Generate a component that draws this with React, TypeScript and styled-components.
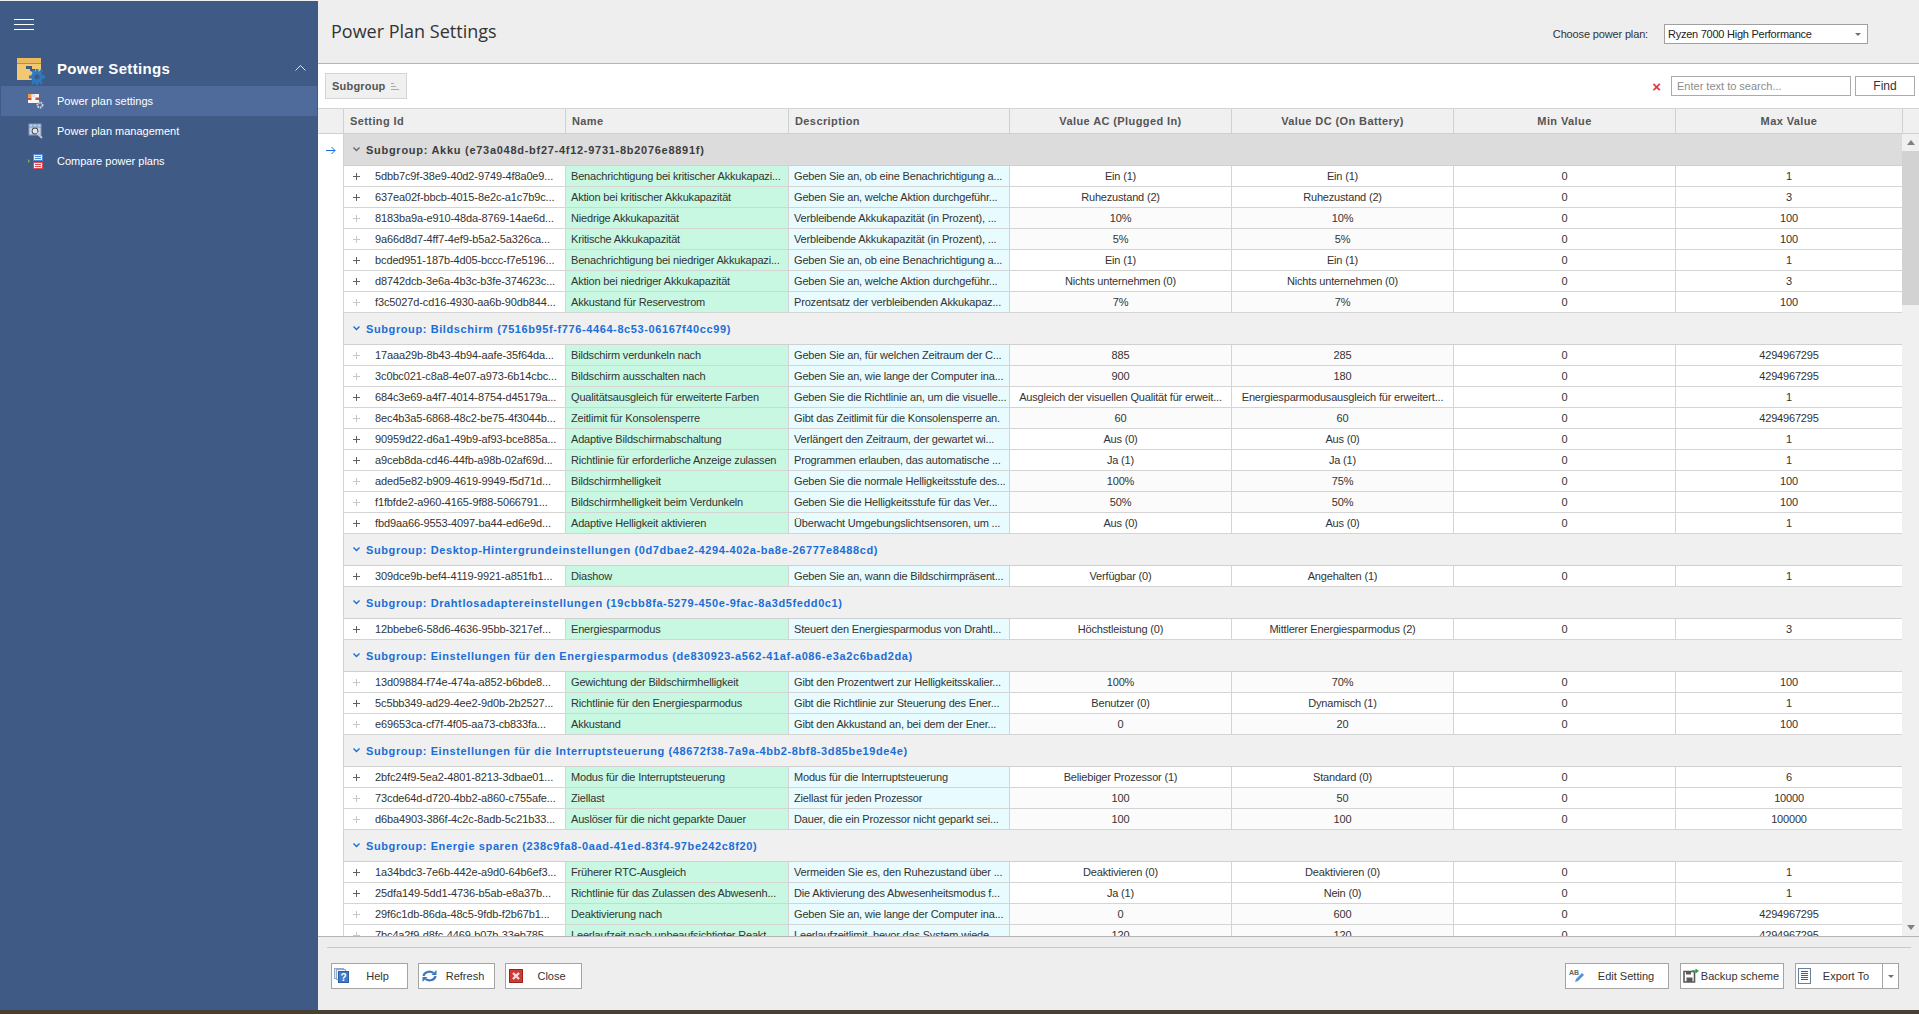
import React from "react";
import styled, { createGlobalStyle } from "styled-components";

const Global = createGlobalStyle`
  html, body { margin: 0; padding: 0; height: 100%; overflow: hidden; background: #4a3f35; }
  #root { height: 100%; }
  * { box-sizing: border-box; }
`;

const FONT = `"Liberation Sans", Arial, sans-serif`;
const COLS = "25px 222px 223px 221px 222px 222px 222px 227px 17px";

const Shell = styled.div`
  width: 1919px; height: 1014px; display: flex; flex-direction: column;
  background: #4a3f35; font-family: ${FONT}; font-size: 11px; color: #333;
`;
const Window = styled.div`display: flex; height: 1010px; padding-top: 1px; background: #f0f0f0;`;
const Sidebar = styled.aside`
  width: 318px; flex: none; background: #3e5a85; color: #fff; padding: 0 1px;
  display: flex; flex-direction: column;
`;
const Burger = styled.div`height: 54px; padding: 18px 0 0 13px; display: flex; flex-direction: column; gap: 4px;
  span { display: block; width: 20px; height: 1px; background: #fff; }
`;
const GroupHead = styled.div`height: 31px; display: flex; align-items: center; padding: 0 11px 0 15px;`;
const GroupTitle = styled.div`font-size: 15px; font-weight: 700; margin: 0 0 4px 12px; flex: 1; letter-spacing: .35px;`;
const Collapse = styled.svg`margin-bottom: 5px;`;
const NavItem = styled.div<{ $active?: boolean }>`
  height: 30px; display: flex; align-items: center; padding-left: 27px; gap: 13px; font-size: 11px;
  background: ${p => (p.$active ? "#4e6b9b" : "transparent")};
`;
const Main = styled.main`flex: 1; display: flex; flex-direction: column; min-width: 0;`;
const Header = styled.header`
  height: 63px; flex: none; background: #eeeeee; border-bottom: 1px solid #b4b4b4; display: flex;
  align-items: flex-start; justify-content: space-between; padding: 17px 0 0 13px;
`;
const Title = styled.h1`margin: 0; font: 400 18px "Open Sans", sans-serif; color: #333; line-height: 26px;`;
const PlanPicker = styled.div`display: flex; align-items: center; margin: 6px 51px 0 0; gap: 16px; letter-spacing: -.15px;`;
const Combo = styled.div`
  width: 204px; height: 20px; background: #fff; border: 1px solid #a0a0a0; display: flex; align-items: center;
  justify-content: space-between; padding: 0 6px 0 3px; color: #222; letter-spacing: -.25px;
`;
const Caret = styled.span`width: 0; height: 0; border-style: solid; border-color: #707070 transparent transparent; border-width: 3px 3px 0;`;
const SearchBar = styled.div`
  height: 45px; flex: none; background: #fff; border-bottom: 1px solid #d4d4d4; display: flex; align-items: center;
  padding: 0 4px 0 7px;
`;
const GroupChip = styled.div`
  height: 26px; width: 82px; background: #f0f0f0; border: 1px solid #d4d4d4; display: flex; align-items: center;
  padding-left: 6px; gap: 5px; font-weight: 700; color: #555; letter-spacing: .2px;
`;
const Spacer = styled.div`flex: 1;`;
const ClearX = styled.span`color: #e0364a; font-weight: 700; font-size: 15px; line-height: 15px; margin-right: 10px;`;
const SearchInput = styled.div`width: 180px; height: 20px; border: 1px solid #ababab; padding-left: 5px; line-height: 18px; color: #8c8c8c;`;
const FindBtn = styled.div`width: 60px; height: 20px; margin-left: 4px; border: 1px solid #ababab; text-align: center; line-height: 18px; color: #333; font-size: 12px;`;
const GridArea = styled.div`flex: 1; min-height: 0; overflow: hidden; background: #fff; position: relative; border-bottom: 1px solid #b4b4b4;`;
const HeadRow = styled.div`
  display: grid; grid-template-columns: ${COLS}; height: 25px; background: #f0f0f0; border-bottom: 1px solid #d0d0d0;
`;
const HeadCell = styled.div<{ $center?: boolean }>`
  border-left: 1px solid #d0d0d0; display: flex; align-items: center; font-weight: 700; color: #555; padding: 0 6px;
  letter-spacing: .4px;
  justify-content: ${p => (p.$center ? "center" : "flex-start")};
`;
const IndicatorHead = styled.div``;
const Scroll = styled.div`
  position: absolute; right: 0; top: 25px; bottom: 0; width: 17px; background: #f0f0f0;
`;
const ScrollBtn = styled.div<{ $pos: "top" | "bottom" }>`
  position: absolute; left: 0; right: 0; height: 17px; display: flex; align-items: center; justify-content: center;
  ${p => (p.$pos === "top" ? "top: 0;" : "bottom: 0;")}
`;
const Thumb = styled.div`position: absolute; left: 0; right: 0; top: 17px; height: 154px; background: #d2d2d2;`;
const Tri = styled.span<{ $up?: boolean }>`
  width: 0; height: 0; border-left: 4px solid transparent; border-right: 4px solid transparent;
  ${p => (p.$up ? "border-bottom: 5px solid #808080;" : "border-top: 5px solid #808080;")}
`;
const GroupRow = styled.div`height: 32px; display: grid; grid-template-columns: 25px 1fr;`;
const Indicator = styled.div`display: flex; align-items: center; justify-content: center; color: #1a6ed8; background: #fff;`;
const GroupBody = styled.div<{ $focus?: boolean }>`
  display: flex; align-items: center; gap: 6px; padding-left: 9px; font-weight: 700; margin-right: 17px;
  letter-spacing: ${p => (p.$focus ? ".72px" : ".6px")};
  border-left: 1px solid #d0d0d0; border-bottom: 1px solid #d0d0d0;
  background: ${p => (p.$focus ? "#dcdcdc" : "#f0f0f0")};
  color: ${p => (p.$focus ? "#3c3c3c" : "#1a6ed8")};
`;
const Chevron = styled.svg`flex: none;`;
const Row = styled.div`display: grid; grid-template-columns: 25px 222px 223px 221px 222px 222px 222px 227px; height: 21px;`;
const Cell = styled.div<{ $bg?: string; $center?: boolean }>`
  border-left: 1px solid #d4d4d4; border-bottom: 1px solid #d4d4d4; padding: 0 5px; display: flex; align-items: center;
  white-space: nowrap; overflow: hidden; letter-spacing: -.18px; background: ${p => p.$bg || "#fff"};
  justify-content: ${p => (p.$center ? "center" : "flex-start")};
`;
const IdCell = styled(Cell)`padding-left: 9px; gap: 15px; letter-spacing: -.12px;`;
const Plus = styled.span<{ $on: boolean }>`
  position: relative; width: 7px; height: 7px; flex: none;
  &::before, &::after { content: ""; position: absolute; background: ${p => (p.$on ? "#606060" : "#c8c8c8")}; }
  &::before { left: 0; right: 0; top: 3px; height: 1px; }
  &::after { top: 0; bottom: 0; left: 3px; width: 1px; }
`;
const Footer = styled.footer`height: 73px; flex: none; background: #eeeeee; padding: 10px 8px 0 9px;`;
const Rule = styled.div`height: 1px; background: #c8c8c8;`;
const Buttons = styled.div`display: flex; align-items: center; justify-content: space-between; margin-top: 15px; padding: 0 12px 0 4px;`;
const ButtonGroup = styled.div<{ $gap: number }>`display: flex; align-items: center; gap: ${p => p.$gap}px;`;
const Split = styled.div`display: flex;`;
const Btn = styled.div<{ $w: number }>`
  width: ${p => p.$w}px; height: 26px; border: 1px solid #a4a4a4; background: #fff; display: flex; align-items: center;
  padding: 0 2px; font-size: 11px; color: #333; flex: none;
`;
const BtnLabel = styled.span`flex: 1; text-align: center; white-space: nowrap;`;
const SplitArrow = styled.div`width: 16px; height: 26px; border: 1px solid #a4a4a4; border-left: 0; background: #fff; display: flex; align-items: center; justify-content: center;`;

type R = [string, string, string, string, string, string, string, boolean];
type G = { title: string; focus?: boolean; rows: R[] };

const groups: G[] = [
  { focus: true, title: "Subgroup: Akku (e73a048d-bf27-4f12-9731-8b2076e8891f)", rows: [
    ["5dbb7c9f-38e9-40d2-9749-4f8a0e9...", "Benachrichtigung bei kritischer Akkukapazi...", "Geben Sie an, ob eine Benachrichtigung a...", "Ein (1)", "Ein (1)", "0", "1", true],
    ["637ea02f-bbcb-4015-8e2c-a1c7b9c...", "Aktion bei kritischer Akkukapazität", "Geben Sie an, welche Aktion durchgeführ...", "Ruhezustand (2)", "Ruhezustand (2)", "0", "3", true],
    ["8183ba9a-e910-48da-8769-14ae6d...", "Niedrige Akkukapazität", "Verbleibende Akkukapazität (in Prozent), ...", "10%", "10%", "0", "100", false],
    ["9a66d8d7-4ff7-4ef9-b5a2-5a326ca...", "Kritische Akkukapazität", "Verbleibende Akkukapazität (in Prozent), ...", "5%", "5%", "0", "100", false],
    ["bcded951-187b-4d05-bccc-f7e5196...", "Benachrichtigung bei niedriger Akkukapazi...", "Geben Sie an, ob eine Benachrichtigung a...", "Ein (1)", "Ein (1)", "0", "1", true],
    ["d8742dcb-3e6a-4b3c-b3fe-374623c...", "Aktion bei niedriger Akkukapazität", "Geben Sie an, welche Aktion durchgeführ...", "Nichts unternehmen (0)", "Nichts unternehmen (0)", "0", "3", true],
    ["f3c5027d-cd16-4930-aa6b-90db844...", "Akkustand für Reservestrom", "Prozentsatz der verbleibenden Akkukapaz...", "7%", "7%", "0", "100", false],
  ]},
  { title: "Subgroup: Bildschirm (7516b95f-f776-4464-8c53-06167f40cc99)", rows: [
    ["17aaa29b-8b43-4b94-aafe-35f64da...", "Bildschirm verdunkeln nach", "Geben Sie an, für welchen Zeitraum der C...", "885", "285", "0", "4294967295", false],
    ["3c0bc021-c8a8-4e07-a973-6b14cbc...", "Bildschirm ausschalten nach", "Geben Sie an, wie lange der Computer ina...", "900", "180", "0", "4294967295", false],
    ["684c3e69-a4f7-4014-8754-d45179a...", "Qualitätsausgleich für erweiterte Farben", "Geben Sie die Richtlinie an, um die visuelle...", "Ausgleich der visuellen Qualität für erweit...", "Energiesparmodusausgleich für erweitert...", "0", "1", true],
    ["8ec4b3a5-6868-48c2-be75-4f3044b...", "Zeitlimit für Konsolensperre", "Gibt das Zeitlimit für die Konsolensperre an.", "60", "60", "0", "4294967295", false],
    ["90959d22-d6a1-49b9-af93-bce885a...", "Adaptive Bildschirmabschaltung", "Verlängert den Zeitraum, der gewartet wi...", "Aus (0)", "Aus (0)", "0", "1", true],
    ["a9ceb8da-cd46-44fb-a98b-02af69d...", "Richtlinie für erforderliche Anzeige zulassen", "Programmen erlauben, das automatische ...", "Ja (1)", "Ja (1)", "0", "1", true],
    ["aded5e82-b909-4619-9949-f5d71d...", "Bildschirmhelligkeit", "Geben Sie die normale Helligkeitsstufe des...", "100%", "75%", "0", "100", false],
    ["f1fbfde2-a960-4165-9f88-5066791...", "Bildschirmhelligkeit beim Verdunkeln", "Geben Sie die Helligkeitsstufe für das Ver...", "50%", "50%", "0", "100", false],
    ["fbd9aa66-9553-4097-ba44-ed6e9d...", "Adaptive Helligkeit aktivieren", "Überwacht Umgebungslichtsensoren, um ...", "Aus (0)", "Aus (0)", "0", "1", true],
  ]},
  { title: "Subgroup: Desktop-Hintergrundeinstellungen (0d7dbae2-4294-402a-ba8e-26777e8488cd)", rows: [
    ["309dce9b-bef4-4119-9921-a851fb1...", "Diashow", "Geben Sie an, wann die Bildschirmpräsent...", "Verfügbar (0)", "Angehalten (1)", "0", "1", true],
  ]},
  { title: "Subgroup: Drahtlosadaptereinstellungen (19cbb8fa-5279-450e-9fac-8a3d5fedd0c1)", rows: [
    ["12bbebe6-58d6-4636-95bb-3217ef...", "Energiesparmodus", "Steuert den Energiesparmodus von Drahtl...", "Höchstleistung (0)", "Mittlerer Energiesparmodus (2)", "0", "3", true],
  ]},
  { title: "Subgroup: Einstellungen für den Energiesparmodus (de830923-a562-41af-a086-e3a2c6bad2da)", rows: [
    ["13d09884-f74e-474a-a852-b6bde8...", "Gewichtung der Bildschirmhelligkeit", "Gibt den Prozentwert zur Helligkeitsskalier...", "100%", "70%", "0", "100", false],
    ["5c5bb349-ad29-4ee2-9d0b-2b2527...", "Richtlinie für den Energiesparmodus", "Gibt die Richtlinie zur Steuerung des Ener...", "Benutzer (0)", "Dynamisch (1)", "0", "1", true],
    ["e69653ca-cf7f-4f05-aa73-cb833fa...", "Akkustand", "Gibt den Akkustand an, bei dem der Ener...", "0", "20", "0", "100", false],
  ]},
  { title: "Subgroup: Einstellungen für die Interruptsteuerung (48672f38-7a9a-4bb2-8bf8-3d85be19de4e)", rows: [
    ["2bfc24f9-5ea2-4801-8213-3dbae01...", "Modus für die Interruptsteuerung", "Modus für die Interruptsteuerung", "Beliebiger Prozessor (1)", "Standard (0)", "0", "6", true],
    ["73cde64d-d720-4bb2-a860-c755afe...", "Ziellast", "Ziellast für jeden Prozessor", "100", "50", "0", "10000", false],
    ["d6ba4903-386f-4c2c-8adb-5c21b33...", "Auslöser für die nicht geparkte Dauer", "Dauer, die ein Prozessor nicht geparkt sei...", "100", "100", "0", "100000", false],
  ]},
  { title: "Subgroup: Energie sparen (238c9fa8-0aad-41ed-83f4-97be242c8f20)", rows: [
    ["1a34bdc3-7e6b-442e-a9d0-64b6ef3...", "Früherer RTC-Ausgleich", "Vermeiden Sie es, den Ruhezustand über ...", "Deaktivieren (0)", "Deaktivieren (0)", "0", "1", true],
    ["25dfa149-5dd1-4736-b5ab-e8a37b...", "Richtlinie für das Zulassen des Abwesenh...", "Die Aktivierung des Abwesenheitsmodus f...", "Ja (1)", "Nein (0)", "0", "1", true],
    ["29f6c1db-86da-48c5-9fdb-f2b67b1...", "Deaktivierung nach", "Geben Sie an, wie lange der Computer ina...", "0", "600", "0", "4294967295", false],
    ["7bc4a2f9-d8fc-4469-b07b-33eb785...", "Leerlaufzeit nach unbeaufsichtigter Reakt...", "Leerlaufzeitlimit, bevor das System wiede...", "120", "120", "0", "4294967295", false],
  ]},
];

const FolderGear = () => (
  <svg width="29" height="28" viewBox="0 0 29 28">
    <rect x="1" y="1" width="24" height="5" fill="#ecba5e" />
    <rect x="1" y="6.500" width="24" height="16.500" fill="#f2c873" />
    <rect x="10" y="9" width="6" height="3" fill="#3e5a85" />
    <rect x="14" y="12" width="5" height="2" fill="#3e5a85" />
    <g fill="#2f78bd">
      <circle cx="21" cy="20" r="6" />
      <path d="M19.600 12h2.800v3h-2.800zM19.600 25h2.800v3h-2.800zM13 18.600h3v2.800h-3zM26 18.600h3v2.800h-3zM15 14.200l2-2 2 2-2 2zM23 14.200l2-2 2 2-2 2zM15 25.800l2 2 2-2-2-2zM23 25.800l2 2 2-2-2-2z" />
    </g>
    <circle cx="21" cy="20" r="2.500" fill="#3e5a85" />
  </svg>
);
const IconSettings = () => (
  <svg width="16" height="16" viewBox="0 0 16 16">
    <rect x="0" y="1" width="11" height="9" fill="#f4f4f4" />
    <rect x="0" y="1" width="3.500" height="3" fill="#e8a33d" /><rect x="4" y="1" width="3" height="3" fill="#e2e2e2" />
    <rect x="0" y="4.500" width="3.500" height="2.500" fill="#d8483a" /><rect x="7.500" y="4.500" width="3.500" height="2.500" fill="#d8483a" />
    <circle cx="12" cy="12" r="2.500" fill="none" stroke="#cfd6e0" strokeWidth="2" strokeDasharray="1.600 .8" />
  </svg>
);
const IconManage = () => (
  <svg width="16" height="16" viewBox="0 0 16 16">
    <rect x="1" y="1" width="12" height="11" fill="#c6d4ea" stroke="#7f96bb" />
    <path d="M1 4h12M5 1v11M9 1v11" stroke="#7f96bb" />
    <circle cx="7" cy="8" r="3" fill="#dfe6f0" stroke="#444" />
    <path d="M9 10l5 5" stroke="#c8c8c8" strokeWidth="2" />
  </svg>
);
const IconCompare = () => (
  <svg width="16" height="17" viewBox="0 0 16 17">
    <path d="M0 6l2 2-2 2z" fill="#7ab648" />
    <rect x="5.500" y="1.500" width="9" height="6" fill="#e6eefc" stroke="#4d87d6" />
    <path d="M7 3.500h6M7 5.500h6" stroke="#4d87d6" />
    <rect x="5.500" y="9.500" width="9" height="6" fill="#fbe6e6" stroke="#d64d55" />
    <path d="M7 11.500h6M7 13.500h6" stroke="#d64d55" />
  </svg>
);
const IconHelp = () => (
  <svg width="16" height="16" viewBox="0 0 16 16">
    <rect x="0.500" y="0.500" width="9" height="10" fill="#dfe8f5" stroke="#8fa9cf" />
    <rect x="2.500" y="1.500" width="9" height="10" fill="#eef3fa" stroke="#8fa9cf" />
    <rect x="4.500" y="3.500" width="10" height="11" fill="#3d7cc9" stroke="#2a5d9e" />
    <text x="9.500" y="13" fontSize="10" fontWeight="700" textAnchor="middle" fill="#fff" fontFamily="Liberation Sans">?</text>
  </svg>
);
const IconRefresh = () => (
  <svg width="17" height="16" viewBox="0 0 16 16" fill="none" stroke="#3b78bf" strokeWidth="2.200">
    <path d="M2 8a6 5 0 0 1 10-3" /><path d="M14 8a6 5 0 0 1-10 3" />
    <path d="M15 2v5h-5z" fill="#3b78bf" stroke="none" /><path d="M1 14V9h5z" fill="#3b78bf" stroke="none" />
  </svg>
);
const IconClose = () => (
  <svg width="16" height="16" viewBox="0 0 16 16">
    <rect x="1.500" y="1.500" width="13" height="13" fill="#cf3a32" stroke="#9c231d" />
    <path d="M5 5l6 6M11 5l-6 6" stroke="#f5dede" strokeWidth="2.400" />
  </svg>
);
const IconEdit = () => (
  <svg width="18" height="16" viewBox="0 0 18 16">
    <text x="1" y="7" fontSize="7" fontWeight="700" fill="#666" fontFamily="Liberation Sans">AB</text>
    <path d="M7 14l1-3 6-6 2 2-6 6z" fill="#4f93d8" />
  </svg>
);
const IconBackup = () => (
  <svg width="16" height="16" viewBox="0 0 16 16">
    <path d="M1 3.500h9.500l1 1V14H1z" fill="none" stroke="#5a5a5a" strokeWidth="1.600" />
    <path d="M3 4h5v2.500H3z" fill="#5a5a5a" />
    <path d="M3.500 9.500h6V14h-6z" fill="#5a5a5a" />
    <path d="M9 2.200h3.500V0.500L16 3l-3.500 2.500V3.800H9z" fill="#2f9c4b" />
  </svg>
);
const IconDoc = () => (
  <svg width="14" height="16" viewBox="0 0 14 16" fill="none" stroke="#3c5f96">
    <rect x="0.500" y="0.500" width="12" height="15" stroke="#6a7f9f" />
    <path d="M3 3.500h7M3 5.500h7M3 7.500h7M3 9.500h7M3 11.500h7" />
  </svg>
);
const Arrow = () => (
  <svg width="10" height="9" viewBox="0 0 10 9" fill="none" stroke="#1a6ed8">
    <path d="M0 4.500h9M5.500 1l3.500 3.500L5.500 8" />
  </svg>
);
const Down = ({ color }: { color: string }) => (
  <Chevron width="7" height="5" viewBox="0 0 7 5"><path d="M0.500 0.500L3.500 3.500L6.500 0.500" fill="none" stroke={color} strokeWidth="1.400" /></Chevron>
);

export default function App() {
  return (
    <Shell>
      <Global />
      <Window>
        <Sidebar>
          <Burger><span /><span /><span /></Burger>
          <GroupHead>
            <FolderGear />
            <GroupTitle>Power Settings</GroupTitle>
            <Collapse width="11" height="6" viewBox="0 0 11 6"><path d="M0.500 5.500L5.500 0.500L10.500 5.500" fill="none" stroke="#e4e8f0" /></Collapse>
          </GroupHead>
          <NavItem $active><IconSettings />Power plan settings</NavItem>
          <NavItem><IconManage />Power plan management</NavItem>
          <NavItem><IconCompare />Compare power plans</NavItem>
        </Sidebar>
        <Main>
          <Header>
            <Title>Power Plan Settings</Title>
            <PlanPicker>
              <span>Choose power plan:</span>
              <Combo>Ryzen 7000 High Performance<Caret /></Combo>
            </PlanPicker>
          </Header>
          <SearchBar>
            <GroupChip>Subgroup
              <svg width="8" height="7" viewBox="0 0 8 7"><path d="M0 .5h3M0 3.500h5M0 6.500h8" stroke="#aaa" /></svg>
            </GroupChip>
            <Spacer />
            <ClearX>×</ClearX>
            <SearchInput>Enter text to search...</SearchInput>
            <FindBtn>Find</FindBtn>
          </SearchBar>
          <GridArea>
            <HeadRow>
              <IndicatorHead />
              <HeadCell>Setting Id</HeadCell>
              <HeadCell>Name</HeadCell>
              <HeadCell>Description</HeadCell>
              <HeadCell $center>Value AC (Plugged In)</HeadCell>
              <HeadCell $center>Value DC (On Battery)</HeadCell>
              <HeadCell $center>Min Value</HeadCell>
              <HeadCell $center>Max Value</HeadCell>
              <HeadCell />
            </HeadRow>
            {groups.map(g => (
              <React.Fragment key={g.title}>
                <GroupRow>
                  <Indicator>{g.focus && <Arrow />}</Indicator>
                  <GroupBody $focus={g.focus}>
                    <Down color={g.focus ? "#666" : "#1a6ed8"} />
                    {g.title}
                  </GroupBody>
                </GroupRow>
                {g.rows.map(r => (
                  <Row key={r[0]}>
                    <Indicator />
                    <IdCell><Plus $on={r[7]} />{r[0]}</IdCell>
                    <Cell $bg="#c8f8e1">{r[1]}</Cell>
                    <Cell $bg="#e8fcff">{r[2]}</Cell>
                    <Cell $center $bg={r[7] ? "#fff" : "#fbfbfb"}>{r[3]}</Cell>
                    <Cell $center $bg={r[7] ? "#fff" : "#fbfbfb"}>{r[4]}</Cell>
                    <Cell $center>{r[5]}</Cell>
                    <Cell $center>{r[6]}</Cell>
                  </Row>
                ))}
              </React.Fragment>
            ))}
            <Scroll>
              <ScrollBtn $pos="top"><Tri $up /></ScrollBtn>
              <Thumb />
              <ScrollBtn $pos="bottom"><Tri /></ScrollBtn>
            </Scroll>
          </GridArea>
          <Footer>
            <Rule />
            <Buttons>
              <ButtonGroup $gap={10}>
                <Btn $w={77}><IconHelp /><BtnLabel>Help</BtnLabel></Btn>
                <Btn $w={77}><IconRefresh /><BtnLabel>Refresh</BtnLabel></Btn>
                <Btn $w={77}><IconClose /><BtnLabel>Close</BtnLabel></Btn>
              </ButtonGroup>
              <ButtonGroup $gap={11}>
                <Btn $w={104}><IconEdit /><BtnLabel>Edit Setting</BtnLabel></Btn>
                <Btn $w={104}><IconBackup /><BtnLabel>Backup scheme</BtnLabel></Btn>
                <Split>
                  <Btn $w={88}><IconDoc /><BtnLabel>Export To</BtnLabel></Btn>
                  <SplitArrow><Caret /></SplitArrow>
                </Split>
              </ButtonGroup>
            </Buttons>
          </Footer>
        </Main>
      </Window>
    </Shell>
  );
}
